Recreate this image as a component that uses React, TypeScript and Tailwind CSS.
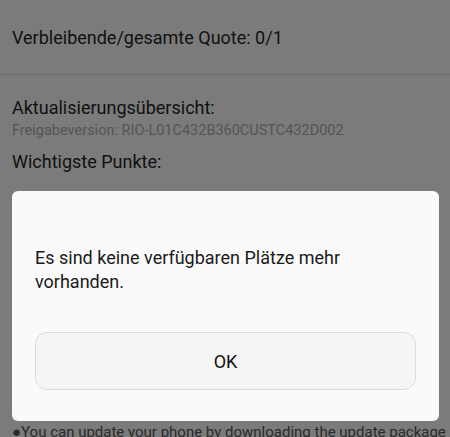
export default function App() {
  return (
    <div
      className="relative h-[437px] w-[450px] overflow-hidden bg-[#7b7b7b] text-[#111]"
      style={{ fontFamily: "Roboto, 'Noto Sans', sans-serif" }}
    >
      {/* page content under the dim layer */}
      <div className="px-3">
        <div className="flex h-[74px] items-center text-[18px]">Verbleibende/gesamte Quote: 0/1</div>
      </div>
      <div className="h-px bg-[#6c6c6c]" />
      <div className="px-3 pt-[21px]">
        <p className="text-[18px] leading-[24px]">Aktualisierungsübersicht:</p>
        <p className="mt-[1px] text-[14.5px] leading-[20px] text-[#555]">Freigabeversion: RIO-L01C432B360CUSTC432D002</p>
        <p className="mt-[9px] text-[18px] leading-[24px]">Wichtigste Punkte:</p>
        <div className="h-[247px]" />
        <p className="whitespace-nowrap text-[15px] leading-[22px] text-[#2a2a2a]">
          ●You can update your phone by downloading the update package
        </p>
      </div>

      {/* dialog */}
      <div className="absolute left-3 top-[191px] w-[427px] rounded-[6px] bg-[#fafafa] px-[23px] pb-[31px] pt-[55px]">
        <p className="text-[18px] leading-[24px] text-[#1a1a1a]">
          Es sind keine verfügbaren Plätze mehr vorhanden.
        </p>
        <button className="mt-[38px] flex h-[58px] w-full items-center justify-center rounded-[12px] border border-[#dcdcdc] bg-[#f5f5f5] text-[18px] text-[#111]">
          OK
        </button>
      </div>
    </div>
  );
}
